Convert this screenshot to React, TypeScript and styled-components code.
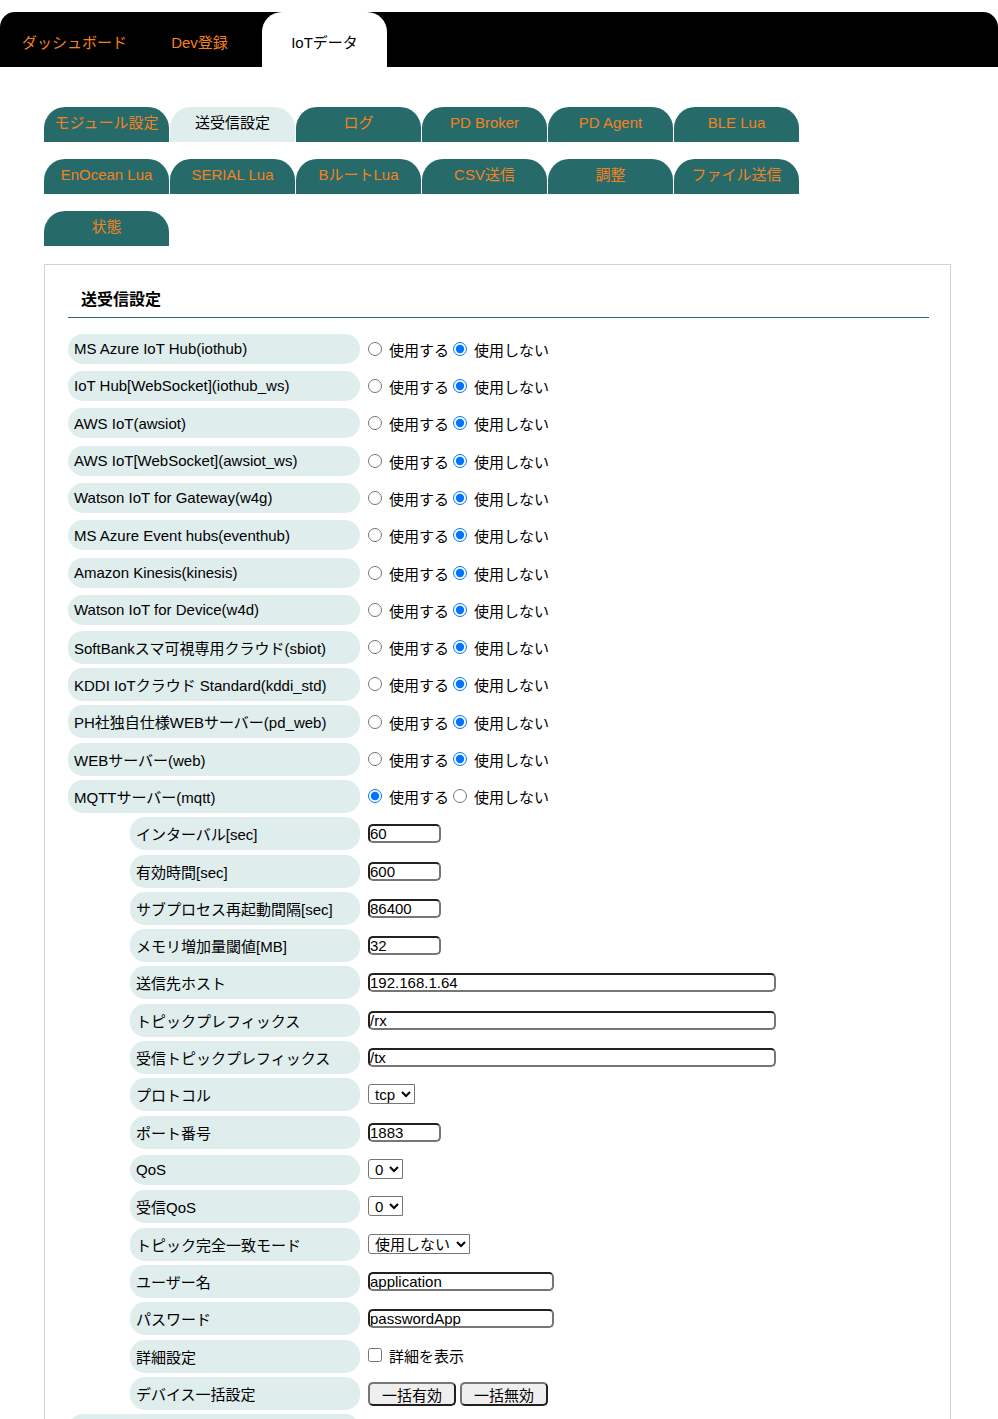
import React from 'react';
import styled, { createGlobalStyle } from 'styled-components';

interface IField {
    readonly label: string;
    readonly sub?: boolean;
    readonly kind: 'radio' | 'text' | 'select' | 'check' | 'buttons';
    readonly value?: string;
    readonly width?: number;
    readonly on?: boolean;
    readonly options?: string[];
}

const GlobalStyle = createGlobalStyle`
    body {
        margin: 0;
        background: #fff;
        color: #000;
        font-family: "Liberation Sans", "Noto Sans CJK JP", sans-serif;
        font-size: 15px;
    }
`;

const navTabs = ['ダッシュボード', 'Dev登録', 'IoTデータ'];
const subTabs = [
    'モジュール設定',
    '送受信設定',
    'ログ',
    'PD Broker',
    'PD Agent',
    'BLE Lua',
    'EnOcean Lua',
    'SERIAL Lua',
    'BルートLua',
    'CSV送信',
    '調整',
    'ファイル送信',
    '状態',
];

const services: [string, boolean][] = [
    ['MS Azure IoT Hub(iothub)', false],
    ['IoT Hub[WebSocket](iothub_ws)', false],
    ['AWS IoT(awsiot)', false],
    ['AWS IoT[WebSocket](awsiot_ws)', false],
    ['Watson IoT for Gateway(w4g)', false],
    ['MS Azure Event hubs(eventhub)', false],
    ['Amazon Kinesis(kinesis)', false],
    ['Watson IoT for Device(w4d)', false],
    ['SoftBankスマ可視専用クラウド(sbiot)', false],
    ['KDDI IoTクラウド Standard(kddi_std)', false],
    ['PH社独自仕様WEBサーバー(pd_web)', false],
    ['WEBサーバー(web)', false],
    ['MQTTサーバー(mqtt)', true],
];

const fields: IField[] = [
    ...services.map(([label, on]) => ({ label, kind: 'radio' as const, on })),
    { label: 'インターバル[sec]', sub: true, kind: 'text', value: '60', width: 73 },
    { label: '有効時間[sec]', sub: true, kind: 'text', value: '600', width: 73 },
    { label: 'サブプロセス再起動間隔[sec]', sub: true, kind: 'text', value: '86400', width: 73 },
    { label: 'メモリ増加量閾値[MB]', sub: true, kind: 'text', value: '32', width: 73 },
    { label: '送信先ホスト', sub: true, kind: 'text', value: '192.168.1.64', width: 408 },
    { label: 'トピックプレフィックス', sub: true, kind: 'text', value: '/rx', width: 408 },
    { label: '受信トピックプレフィックス', sub: true, kind: 'text', value: '/tx', width: 408 },
    { label: 'プロトコル', sub: true, kind: 'select', value: 'tcp', options: ['tcp', 'ssl'], width: 47 },
    { label: 'ポート番号', sub: true, kind: 'text', value: '1883', width: 73 },
    { label: 'QoS', sub: true, kind: 'select', value: '0', options: ['0', '1', '2'], width: 35 },
    { label: '受信QoS', sub: true, kind: 'select', value: '0', options: ['0', '1', '2'], width: 35 },
    { label: 'トピック完全一致モード', sub: true, kind: 'select', value: '使用しない', options: ['使用する', '使用しない'], width: 102 },
    { label: 'ユーザー名', sub: true, kind: 'text', value: 'application', width: 186 },
    { label: 'パスワード', sub: true, kind: 'text', value: 'passwordApp', width: 186 },
    { label: '詳細設定', sub: true, kind: 'check' },
    { label: 'デバイス一括設定', sub: true, kind: 'buttons' },
];

const isWide = (text: string) => /[^\x00-\x7f]/.test(text);

function FieldValue({ field, index }: { field: IField; index: number }) {
    switch (field.kind) {
        case 'radio':
            return (
                <Choice>
                    <Radio type="radio" name={`svc${index}`} defaultChecked={field.on} />
                    <ChoiceText>使用する</ChoiceText>
                    <Radio type="radio" name={`svc${index}`} defaultChecked={!field.on} $second />
                    <ChoiceText>使用しない</ChoiceText>
                </Choice>
            );
        case 'text':
            return <TextInput type="text" defaultValue={field.value} $width={field.width ?? 73} />;
        case 'select':
            return (
                <Select defaultValue={field.value} $width={field.width ?? 40}>
                    {field.options?.map((o) => (
                        <option key={o} value={o}>
                            {o}
                        </option>
                    ))}
                </Select>
            );
        case 'check':
            return (
                <Choice $check>
                    <Check type="checkbox" />
                    <ChoiceText>詳細を表示</ChoiceText>
                </Choice>
            );
        default:
            return (
                <Buttons>
                    <Button type="button">一括有効</Button>
                    <Button type="button">一括無効</Button>
                </Buttons>
            );
    }
}

export default function App() {
    return (
        <>
            <GlobalStyle />
            <TopNav>
                {navTabs.map((t, i) => (
                    <NavTab key={t} $active={i === 2}>
                        {t}
                    </NavTab>
                ))}
            </TopNav>
            <Page>
                <SubTabs>
                    {subTabs.map((t, i) => (
                        <SubTab key={t} $active={i === 1}>
                            {t}
                        </SubTab>
                    ))}
                </SubTabs>
                <Panel>
                    <PanelTitle>送受信設定</PanelTitle>
                    <Rows>
                        {fields.map((f, i) => (
                            <Row key={f.label} $sub={f.sub}>
                                <Label $sub={f.sub} $tall={isWide(f.label)}>
                                    {f.label}
                                </Label>
                                <FieldValue field={f} index={i} />
                            </Row>
                        ))}
                        <Row>
                            <Label $tall />
                        </Row>
                    </Rows>
                </Panel>
            </Page>
        </>
    );
}

const TopNav = styled.ul`
    display: flex;
    margin: 12px 0 0;
    padding: 0 0 0 12px;
    height: 55px;
    list-style: none;
    background: #000;
    border-radius: 15px 15px 0 0;
`;

const NavTab = styled.li<{ $active?: boolean }>`
    width: 125px;
    box-sizing: border-box;
    padding-top: 21px;
    line-height: 20px;
    text-align: center;
    font-size: 15px;
    color: ${({ $active }) => ($active ? '#000' : '#f5821f')};
    background: ${({ $active }) => ($active ? '#fff' : 'transparent')};
    border-radius: 20px 20px 0 0;
`;

const Page = styled.div`
    padding: 40px 47px 0 44px;
`;

const SubTabs = styled.div`
    display: flex;
    flex-wrap: wrap;
    width: 756px;
    column-gap: 1px;
    row-gap: 17px;
`;

const SubTab = styled.div<{ $active?: boolean }>`
    width: 125px;
    height: 35px;
    line-height: 31px;
    text-align: center;
    font-size: 15px;
    color: ${({ $active }) => ($active ? '#000' : '#f5821f')};
    background: ${({ $active }) => ($active ? '#dfeded' : '#266a69')};
    border-radius: 21px 21px 0 0;
`;

const Panel = styled.div`
    margin-top: 18px;
    border: 1px solid #d2d2d2;
    border-bottom: none;
    padding: 25px 21px 0 23px;
    min-height: 1200px;
`;

const PanelTitle = styled.h2`
    margin: 0;
    padding: 0 0 7px 13px;
    font-size: 16px;
    line-height: 20px;
    font-weight: bold;
    border-bottom: 1px solid #266a69;
`;

const Rows = styled.div`
    display: flex;
    flex-direction: column;
    margin-top: 12px;
`;

const Row = styled.div<{ $sub?: boolean }>`
    display: flex;
    align-items: center;
    height: 37.32px;
    padding-left: ${({ $sub }) => ($sub ? 62 : 0)}px;
`;

const Label = styled.div<{ $sub?: boolean; $tall?: boolean }>`
    display: flex;
    align-items: center;
    flex-shrink: 0;
    box-sizing: border-box;
    width: ${({ $sub }) => ($sub ? 230 : 292)}px;
    height: ${({ $tall }) => ($tall ? 33 : 30)}px;
    margin-right: 8px;
    padding-left: 6px;
    border-radius: 15px;
    background: #dfeded;
    font-size: 15px;
    white-space: nowrap;
`;

const Choice = styled.div<{ $check?: boolean }>`
    display: flex;
    align-items: flex-start;
    padding-top: ${({ $check }) => ($check ? 3 : 5)}px;
`;

const Radio = styled.input<{ $second?: boolean }>`
    width: 14px;
    height: 14px;
    margin: 0 7px 0 ${({ $second }) => ($second ? 4 : 0)}px;
    accent-color: #0075ff;
`;

const Check = styled.input`
    width: 14px;
    height: 14px;
    margin: 0 7px 0 0;
`;

const ChoiceText = styled.span`
    font-size: 15px;
    line-height: 20px;
    margin-top: -1px;
`;

const TextInput = styled.input<{ $width: number }>`
    box-sizing: border-box;
    width: ${({ $width }) => $width}px;
    height: 19px;
    margin-top: 0;
    padding: 0;
    border: 2px inset #767676;
    border-radius: 5px;
    font-family: "Liberation Sans", "Noto Sans CJK JP", sans-serif;
    font-size: 15px;
    color: #000;
    background: #fff;
`;

const Select = styled.select<{ $width: number }>`
    box-sizing: border-box;
    width: ${({ $width }) => $width}px;
    height: 20px;
    margin-top: -1px;
    padding: 0 0 0 2px;
    border: 1px solid #767676;
    border-radius: 3px 0 0 3px;
    font-family: "Liberation Sans", "Noto Sans CJK JP", sans-serif;
    font-size: 15px;
    color: #000;
    background: #fff;
`;

const Buttons = styled.div`
    display: flex;
    gap: 4px;
    margin-top: 2px;
`;

const Button = styled.button`
    box-sizing: border-box;
    width: 88px;
    height: 24px;
    padding: 0;
    border: 2px outset #767676;
    border-radius: 5px;
    background: #efefef;
    font-family: "Liberation Sans", "Noto Sans CJK JP", sans-serif;
    font-size: 15px;
    color: #000;
`;
